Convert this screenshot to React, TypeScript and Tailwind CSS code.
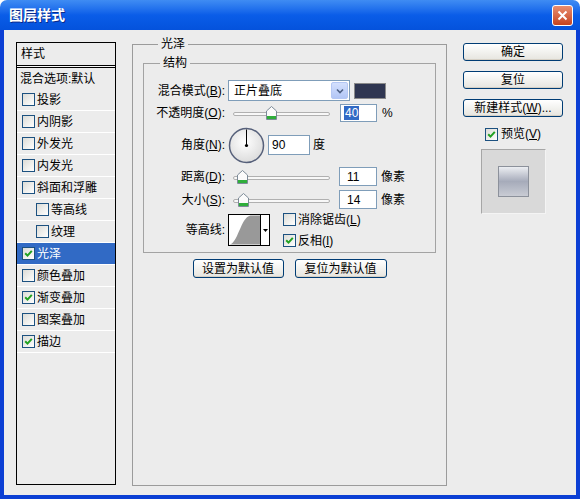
import React from 'react';

const font = { fontFamily: '"Liberation Sans", "Noto Sans CJK SC", sans-serif' };

const Check: React.FC<{ checked?: boolean }> = ({ checked }) => (
  <span className="inline-flex w-[13px] h-[13px] shrink-0 items-center justify-center border border-[#1c5180] bg-linear-to-br from-[#dcdcd7] to-white">
    {checked && (
      <svg width="9" height="9" viewBox="0 0 9 9">
        <path d="M1.2 4.3 L3.5 6.6 L7.8 1.8" fill="none" stroke="#21a121" strokeWidth="2" />
      </svg>
    )}
  </span>
);

const XpButton: React.FC<{ w: string; children: React.ReactNode }> = ({ w, children }) => (
  <button className={`${w} flex items-center justify-center rounded-[3px] border border-[#003c74] bg-linear-to-b from-white to-[#e6e5df] text-[12px] leading-none text-black shadow-[inset_0_-1px_0_#d6d0c5]`}>
    {children}
  </button>
);

const Slider: React.FC<{ pos: number }> = ({ pos }) => (
  <div className="relative w-[108px] h-[18px] shrink-0">
    <div className="absolute left-[5px] right-[6px] top-[8px] h-[4px] rounded-full border border-[#b0b0b0] bg-[#f8f8f8]" />
    <svg className="absolute top-[2px]" style={{ left: pos }} width="11" height="14" viewBox="0 0 11 14">
      <path d="M0.5 5 L5.5 0.5 L10.5 5 L10.5 13.5 L0.5 13.5 Z" fill="#fbfbfb" stroke="#7d8b98" />
      <rect x="1" y="10" width="9" height="3" fill="#2fae3a" />
    </svg>
  </div>
);

const Field: React.FC<{ w: string; h: string; children: React.ReactNode }> = ({ w, h, children }) => (
  <div className={`${w} ${h} shrink-0 flex items-center border border-[#7f9db9] bg-white pl-[3px] text-[12px]`}>{children}</div>
);

const Label: React.FC<{ children: React.ReactNode }> = ({ children }) => (
  <div className="w-[84px] shrink-0 text-right pr-[3px] text-[12px] leading-none whitespace-nowrap">{children}</div>
);

const rows: { name: string; checked?: boolean; indent?: boolean; selected?: boolean }[] = [
  { name: '投影' },
  { name: '内阴影' },
  { name: '外发光' },
  { name: '内发光' },
  { name: '斜面和浮雕' },
  { name: '等高线', indent: true },
  { name: '纹理', indent: true },
  { name: '光泽', checked: true, selected: true },
  { name: '颜色叠加' },
  { name: '渐变叠加', checked: true },
  { name: '图案叠加' },
  { name: '描边', checked: true },
];

export default function App() {
  return (
    <div className="w-[580px] h-[499px] flex flex-col bg-white select-none" style={font}>
      {/* title bar */}
      <div className="h-[30px] shrink-0 flex items-center justify-between rounded-t-[7px] bg-linear-to-b from-[#3f8cf3] via-[#0a5de8] to-[#0452dc] pl-[9px] pr-[7px]">
        <span className="text-[14px] font-bold text-white [text-shadow:1px_1px_0_#0a2a8a]">图层样式</span>
        <div className="w-[21px] h-[21px] flex items-center justify-center rounded-[3px] border border-white bg-linear-to-b from-[#e98d6e] to-[#c4421d]">
          <svg width="11" height="11" viewBox="0 0 11 11">
            <path d="M1.5 1.5 L9.5 9.5 M9.5 1.5 L1.5 9.5" stroke="white" strokeWidth="2" />
          </svg>
        </div>
      </div>

      {/* body */}
      <div className="flex-1 flex items-start bg-[#ececec] border-x-4 border-b-4 border-[#0b3fd4] pl-[12px] pt-[6px] text-black">
        {/* styles list */}
        <div className="mt-[6px] w-[100px] h-[443px] shrink-0 border border-black bg-[#ececec] text-[12px]">
          <div className="h-[23px] flex items-center pl-[4px] border-b border-black">样式</div>
          <div className="h-[1px] bg-[#f8f8f8]" />
          <div className="h-[22px] flex items-center pl-[3px] border-t border-black whitespace-nowrap">混合选项:默认</div>
          {rows.map((r) => (
            <div
              key={r.name}
              className={`h-[22px] flex items-center gap-[2px] border-b border-white whitespace-nowrap ${r.indent ? 'pl-[19px]' : 'pl-[5px]'} ${r.selected ? 'bg-[#316ac5] text-white' : ''}`}
            >
              <Check checked={r.checked} />
              <span>{r.name}</span>
            </div>
          ))}
        </div>

        {/* main group */}
        <fieldset className="ml-[16px] w-[313px] h-[450px] shrink-0 border border-[#9b9b9b] px-[10px]">
          <legend className="ml-[15px] px-[3px] text-[12px] leading-[16px]">光泽</legend>

          <fieldset className="mt-[3px] w-[293px] h-[198px] border border-[#a3a3a3]">
            <legend className="ml-[16px] px-[3px] text-[12px] leading-[16px]">结构</legend>

            {/* blend mode */}
            <div className="mt-[9px] flex items-center h-[21px]">
              <Label>混合模式(<u>B</u>):</Label>
              <div className="w-[122px] h-[21px] flex items-center border border-[#7f9db9] bg-white">
                <span className="flex-1 pl-[5px] text-[12px]">正片叠底</span>
                <span className="w-[17px] h-[17px] mr-[1px] flex items-center justify-center rounded-[2px] border border-[#b4c7f4] bg-linear-to-b from-[#d4e0fd] to-[#b2c6f6]">
                  <svg width="8" height="6" viewBox="0 0 8 6">
                    <path d="M1 1.5 L4 4.5 L7 1.5" fill="none" stroke="#4d6185" strokeWidth="1.6" />
                  </svg>
                </span>
              </div>
              <div className="ml-[4px] w-[32px] h-[16px] bg-[#2f3651] border border-[#8a8a8a]" />
            </div>

            {/* opacity */}
            <div className="mt-[3px] flex items-center h-[18px]">
              <Label>不透明度(<u>O</u>):</Label>
              <Slider pos={38} />
              <div className="ml-[4px]">
                <Field w="w-[37px]" h="h-[18px]">
                  <span className="bg-[#316ac5] text-white leading-[14px] px-[1px]">40</span>
                </Field>
              </div>
              <span className="ml-[5px] text-[12px]">%</span>
            </div>

            {/* angle */}
            <div className="mt-[5px] flex items-center h-[36px]">
              <Label>角度(<u>N</u>):</Label>
              <svg width="37" height="37" viewBox="0 0 37 37" className="shrink-0">
                <defs>
                  <radialGradient id="dialg" cx="45%" cy="40%" r="60%">
                    <stop offset="0%" stopColor="#ffffff" />
                    <stop offset="100%" stopColor="#dcdcdc" />
                  </radialGradient>
                </defs>
                <circle cx="18.5" cy="18.5" r="17" fill="url(#dialg)" stroke="#56607a" strokeWidth="1.5" />
                <line x1="18.5" y1="18.5" x2="18.5" y2="2.5" stroke="#000" strokeWidth="1" />
                <circle cx="18.5" cy="18.5" r="1.6" fill="#000" />
              </svg>
              <div className="ml-[3px]">
                <Field w="w-[42px]" h="h-[20px]">90</Field>
              </div>
              <span className="ml-[3px] text-[12px]">度</span>
            </div>

            {/* distance */}
            <div className="mt-[4px] flex items-center h-[19px]">
              <Label>距离(<u>D</u>):</Label>
              <Slider pos={9} />
              <div className="ml-[3px]">
                <Field w="w-[38px]" h="h-[19px]"><span className="pl-[4px]">11</span></Field>
              </div>
              <span className="ml-[4px] text-[12px]">像素</span>
            </div>

            {/* size */}
            <div className="mt-[4px] flex items-center h-[19px]">
              <Label>大小(<u>S</u>):</Label>
              <Slider pos={10} />
              <div className="ml-[3px]">
                <Field w="w-[38px]" h="h-[19px]"><span className="pl-[4px]">14</span></Field>
              </div>
              <span className="ml-[4px] text-[12px]">像素</span>
            </div>

            {/* contour */}
            <div className="mt-[5px] flex items-center h-[32px]">
              <Label>等高线:</Label>
              <div className="w-[42px] h-[32px] shrink-0 flex border border-black bg-white">
                <svg width="32" height="30" viewBox="0 0 32 30" className="border-r border-black">
                  <path d="M0 30 C9 30 12 2 22 0 L32 0 L32 30 Z" fill="#999999" />
                </svg>
                <div className="flex-1 flex items-center justify-center">
                  <svg width="5" height="3" viewBox="0 0 5 3">
                    <path d="M0 0 L5 0 L2.5 3 Z" fill="#000" />
                  </svg>
                </div>
              </div>
              <div className="ml-[13px] flex flex-col gap-[3px] text-[12px]">
                <div className="flex items-center gap-[2px]">
                  <Check />
                  <span>消除锯齿(<u>L</u>)</span>
                </div>
                <div className="flex items-center gap-[2px]">
                  <Check checked />
                  <span>反相(<u>I</u>)</span>
                </div>
              </div>
            </div>
          </fieldset>

          <div className="mt-[6px] flex justify-center gap-[11px]">
            <XpButton w="w-[91px] h-[19px]">设置为默认值</XpButton>
            <XpButton w="w-[92px] h-[19px]">复位为默认值</XpButton>
          </div>
        </fieldset>

        {/* right column */}
        <div className="ml-[16px] mt-[7px] w-[100px] shrink-0 flex flex-col items-center">
          <XpButton w="w-[100px] h-[18px]">确定</XpButton>
          <div className="h-[10px]" />
          <XpButton w="w-[100px] h-[18px]">复位</XpButton>
          <div className="h-[10px]" />
          <XpButton w="w-[100px] h-[18px]">新建样式(<u>W</u>)...</XpButton>
          <div className="mt-[8px] flex items-center gap-[3px] text-[12px]">
            <Check checked />
            <span>预览(<u>V</u>)</span>
          </div>
          <div className="mt-[6px] w-[65px] h-[65px] flex items-center justify-center border border-[#a6a6a6] border-b-[#f4f4f4] border-r-[#f4f4f4] bg-[#d9d9d9]">
            <div className="w-[31px] h-[31px] border border-[#8c919b] bg-linear-to-b from-[#eceef2] via-[#a6abba] to-[#c9ccd4]" />
          </div>
        </div>
      </div>
    </div>
  );
}
